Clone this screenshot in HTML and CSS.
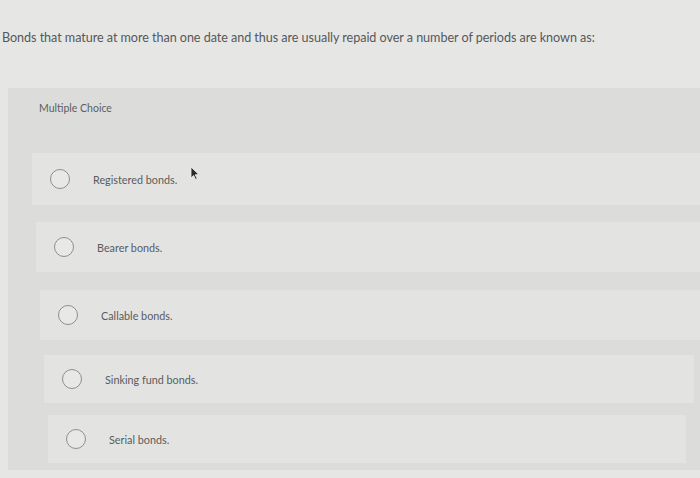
FILE: index.html
```html
<!DOCTYPE html>
<html>
<head>
<meta charset="utf-8">
<link rel="stylesheet" href="styles.css">
</head>
<body>
<div class="page">
  <p class="question">Bonds that mature at more than one date and thus are usually repaid over a number of periods are known as:</p>
  <div class="panel">
    <div class="label">Multiple Choice</div>
    <div class="options">
      <div class="option o1"><span class="radio"></span><span class="text">Registered bonds.</span><span class="cursor"><svg width="10" height="14" viewBox="0 0 10 14"><path d="M1 1 L1 12 L3.6 9.4 L5.6 13.4 L7.2 12.6 L5.2 8.8 L8.8 8.6 Z" fill="#2a2a2a" stroke="#f2f2f2" stroke-width="0.8"/></svg></span></div>
      <div class="option o2"><span class="radio"></span><span class="text">Bearer bonds.</span></div>
      <div class="option o3"><span class="radio"></span><span class="text">Callable bonds.</span></div>
      <div class="option o4"><span class="radio"></span><span class="text">Sinking fund bonds.</span></div>
      <div class="option o5"><span class="radio"></span><span class="text">Serial bonds.</span></div>
    </div>
  </div>
</div>
</body>
</html>
```

FILE: styles.css
```css
html, body {
  margin: 0;
  padding: 0;
  background: #e6e7e5;
}
body {
  width: 700px;
  height: 478px;
  overflow: hidden;
  font-family: Lato, "Open Sans", sans-serif;
  color: #4e4f4f;
}
.page {
  padding-top: 30px;
}
.question {
  margin: 0 0 0 2px;
  font-size: 12.6px;
  line-height: 16px;
  color: #56575a;
  letter-spacing: -0.05px;
}
.panel {
  margin: 42px 0 0 8px;
  background: #dcdddb;
  height: 382px;
  display: flex;
  flex-direction: column;
  box-sizing: border-box;
  padding: 12px 0 0 0;
}
.label {
  font-size: 10.5px;
  color: #5c5d5e;
  padding-left: 31px;
  line-height: 16px;
}
.options {
  display: flex;
  flex-direction: column;
  margin-top: 37px;
}
.option {
  position: relative;
  display: flex;
  align-items: center;
  background: #e3e4e2;
  font-size: 10.8px;
  color: #5a5b5d;
}
.radio {
  width: 20px;
  height: 20px;
  border: 1.3px solid #8d8e90;
  border-radius: 50%;
  box-sizing: border-box;
  flex: none;
  margin-right: 23px;
  background: #e8e8e6;
}
.o1 { height: 52px; margin-left: 24px; padding-left: 18px; }
.o2 { height: 50px; margin-left: 28px; padding-left: 18px; margin-top: 17px; }
.o3 { height: 50px; margin-left: 32px; padding-left: 18px; margin-top: 18px; }
.o4 { height: 48px; margin-left: 36px; padding-left: 18px; margin-top: 15px; margin-right: 6px; }
.o5 { height: 48px; margin-left: 40px; padding-left: 18px; margin-top: 12px; margin-right: 14px; }
.cursor {
  position: absolute;
  left: 158px;
  top: 13px;
}
```
